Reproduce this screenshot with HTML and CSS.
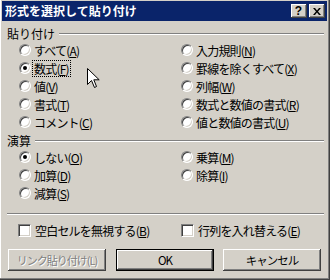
FILE: index.html
```html
<!DOCTYPE html>
<html lang="ja">
<head>
<meta charset="utf-8">
<title>形式を選択して貼り付け</title>
<link rel="stylesheet" href="styles.css">
</head>
<body>
<div class="window">
  <div class="titlebar">
    <span class="title">形式を選択して貼り付け</span>
    <span class="tbtns">
      <span class="tbtn help">?</span>
      <span class="tbtn close"><svg width="8" height="7" viewBox="0 0 8 7"><path d="M0 0h2l2 2.5L6 0h2L5 3.5 8 7H6L4 4.5 2 7H0l3-3.5z" fill="#000"/></svg></span>
    </span>
  </div>
  <div class="content">
    <div class="group-head"><span class="glabel">貼り付け</span><span class="etch"></span></div>
    <div class="grid">
      <div class="opt"><span class="radio"></span><span class="lbl">すべて(<u>A</u>)</span></div>
      <div class="opt"><span class="radio"></span><span class="lbl">入力規則(<u>N</u>)</span></div>
      <div class="opt"><span class="radio on"></span><span class="lbl focus">数式(<u>F</u>)</span></div>
      <div class="opt"><span class="radio"></span><span class="lbl">罫線を除くすべて(<u>X</u>)</span></div>
      <div class="opt"><span class="radio"></span><span class="lbl">値(<u>V</u>)</span></div>
      <div class="opt"><span class="radio"></span><span class="lbl">列幅(<u>W</u>)</span></div>
      <div class="opt"><span class="radio"></span><span class="lbl">書式(<u>T</u>)</span></div>
      <div class="opt"><span class="radio"></span><span class="lbl">数式と数値の書式(<u>R</u>)</span></div>
      <div class="opt"><span class="radio"></span><span class="lbl">コメント(<u>C</u>)</span></div>
      <div class="opt"><span class="radio"></span><span class="lbl">値と数値の書式(<u>U</u>)</span></div>
    </div>
    <div class="group-head g2"><span class="glabel">演算</span><span class="etch"></span></div>
    <div class="grid">
      <div class="opt"><span class="radio on"></span><span class="lbl">しない(<u>O</u>)</span></div>
      <div class="opt"><span class="radio"></span><span class="lbl">乗算(<u>M</u>)</span></div>
      <div class="opt"><span class="radio"></span><span class="lbl">加算(<u>D</u>)</span></div>
      <div class="opt"><span class="radio"></span><span class="lbl">除算(<u>I</u>)</span></div>
      <div class="opt"><span class="radio"></span><span class="lbl">減算(<u>S</u>)</span></div>
    </div>
    <div class="sep"></div>
    <div class="grid checks">
      <div class="opt"><span class="check"></span><span class="lbl">空白セルを無視する(<u>B</u>)</span></div>
      <div class="opt"><span class="check"></span><span class="lbl">行列を入れ替える(<u>E</u>)</span></div>
    </div>
    <div class="buttons">
      <span class="btn disabled">リンク貼り付け(L)</span>
      <span class="btn default">OK</span>
      <span class="btn">キャンセル</span>
    </div>
  </div>
  <svg class="cursor" width="13" height="21" viewBox="0 0 13 21"><path d="M0.5 0.5V16.5L4.5 12.5L7.5 19.5L9.5 18.5L6.8 11.8H12.2Z" fill="#fff" stroke="#000" stroke-width="1"/></svg>
</div>
</body>
</html>
```
FILE: styles.css
```css
* { box-sizing: border-box; }
html, body { margin: 0; padding: 0; }
body {
  width: 330px;
  height: 280px;
  overflow: hidden;
  background: #d4d0c8;
  font-family: "Noto Sans CJK JP", "Liberation Sans", sans-serif;
  font-size: 12px;
  color: #000;
}
.window {
  position: relative;
  width: 330px;
  height: 280px;
  padding: 1px 3px 0 2px;
  background: #d4d0c8;
  box-shadow: inset -1px -1px #404040, inset -2px -2px #808080, inset 1px 0 #ffffff;
}
.titlebar {
  height: 20px;
  background: #0a246a;
  display: flex;
  align-items: center;
  padding: 0 2px 0 3px;
}
.title {
  color: #fff;
  font-weight: bold;
  font-size: 12px;
  line-height: 20px;
}
.tbtns { margin-left: auto; display: flex; gap: 1px; }
.tbtn {
  width: 16px;
  height: 14px;
  background: #d4d0c8;
  box-shadow: inset -1px -1px #404040, inset 1px 1px #fff, inset -2px -2px #808080;
  display: flex;
  align-items: center;
  justify-content: center;
}
.help {
  font-family: "Liberation Sans", sans-serif;
  font-weight: bold;
  font-size: 12px;
  line-height: 14px;
  padding-right: 1px;
}
.close { margin-left: 1px; }
.content { padding: 0 3px 0 5px; }
.group-head {
  display: flex;
  align-items: center;
  height: 14px;
  margin-top: 6px;
}
.group-head.g2 { margin-top: 3px; }
.glabel { line-height: 14px; }
.etch {
  flex: 1;
  height: 2px;
  margin-left: 4px;
  border-top: 1px solid #808080;
  border-bottom: 1px solid #fff;
}
.grid {
  display: grid;
  grid-template-columns: 162px 1fr;
  padding-left: 12px;
}
.opt {
  height: 18px;
  display: flex;
  align-items: center;
}
.lbl {
  line-height: 15px;
  padding: 0 1px;
  margin-left: 2px;
  white-space: nowrap;
  letter-spacing: -0.8px;
}
.lbl u { text-decoration-thickness: 1px; text-underline-offset: 1px; }
.focus { outline: 1px dotted #000; outline-offset: 0; }
.radio {
  width: 12px;
  height: 12px;
  border-radius: 50%;
  background: #fff;
  border: 1px solid;
  border-color: #808080 #fff #fff #808080;
  box-shadow: inset 1px 1px #404040, inset -1px -1px #d4d0c8;
  display: flex;
  align-items: center;
  justify-content: center;
  flex: none;
}
.radio.on::after {
  content: "";
  width: 4px;
  height: 4px;
  border-radius: 50%;
  background: #000;
}
.sep {
  height: 2px;
  margin-top: 11px;
  border-top: 1px solid #808080;
  border-bottom: 1px solid #fff;
}
.checks { margin-top: 6px; padding-left: 11px; grid-template-columns: 163px 1fr; }
.check {
  width: 13px;
  height: 13px;
  background: #fff;
  border: 1px solid;
  border-color: #808080 #fff #fff #808080;
  box-shadow: inset 1px 1px #404040, inset -1px -1px #d4d0c8;
  flex: none;
}
.checks .lbl { margin-left: 3px; }
.buttons {
  display: flex;
  gap: 10px;
  margin-top: 10px;
  padding-left: 1px;
}
.btn {
  width: 98px;
  height: 22px;
  display: flex;
  align-items: center;
  justify-content: center;
  background: #d4d0c8;
  box-shadow: inset -1px -1px #404040, inset 1px 1px #fff, inset -2px -2px #808080;
  font-size: 11.5px;
  letter-spacing: -1px;
  white-space: nowrap;
}
.btn.default {
  border: 1px solid #000;
}
.btn.disabled {
  color: #808080;
  text-shadow: 1px 1px #fff;
  font-size: 11px;
}
.buttons .btn:last-child { margin-left: -1px; }
.cursor {
  position: absolute;
  left: 87px;
  top: 68px;
}
```
